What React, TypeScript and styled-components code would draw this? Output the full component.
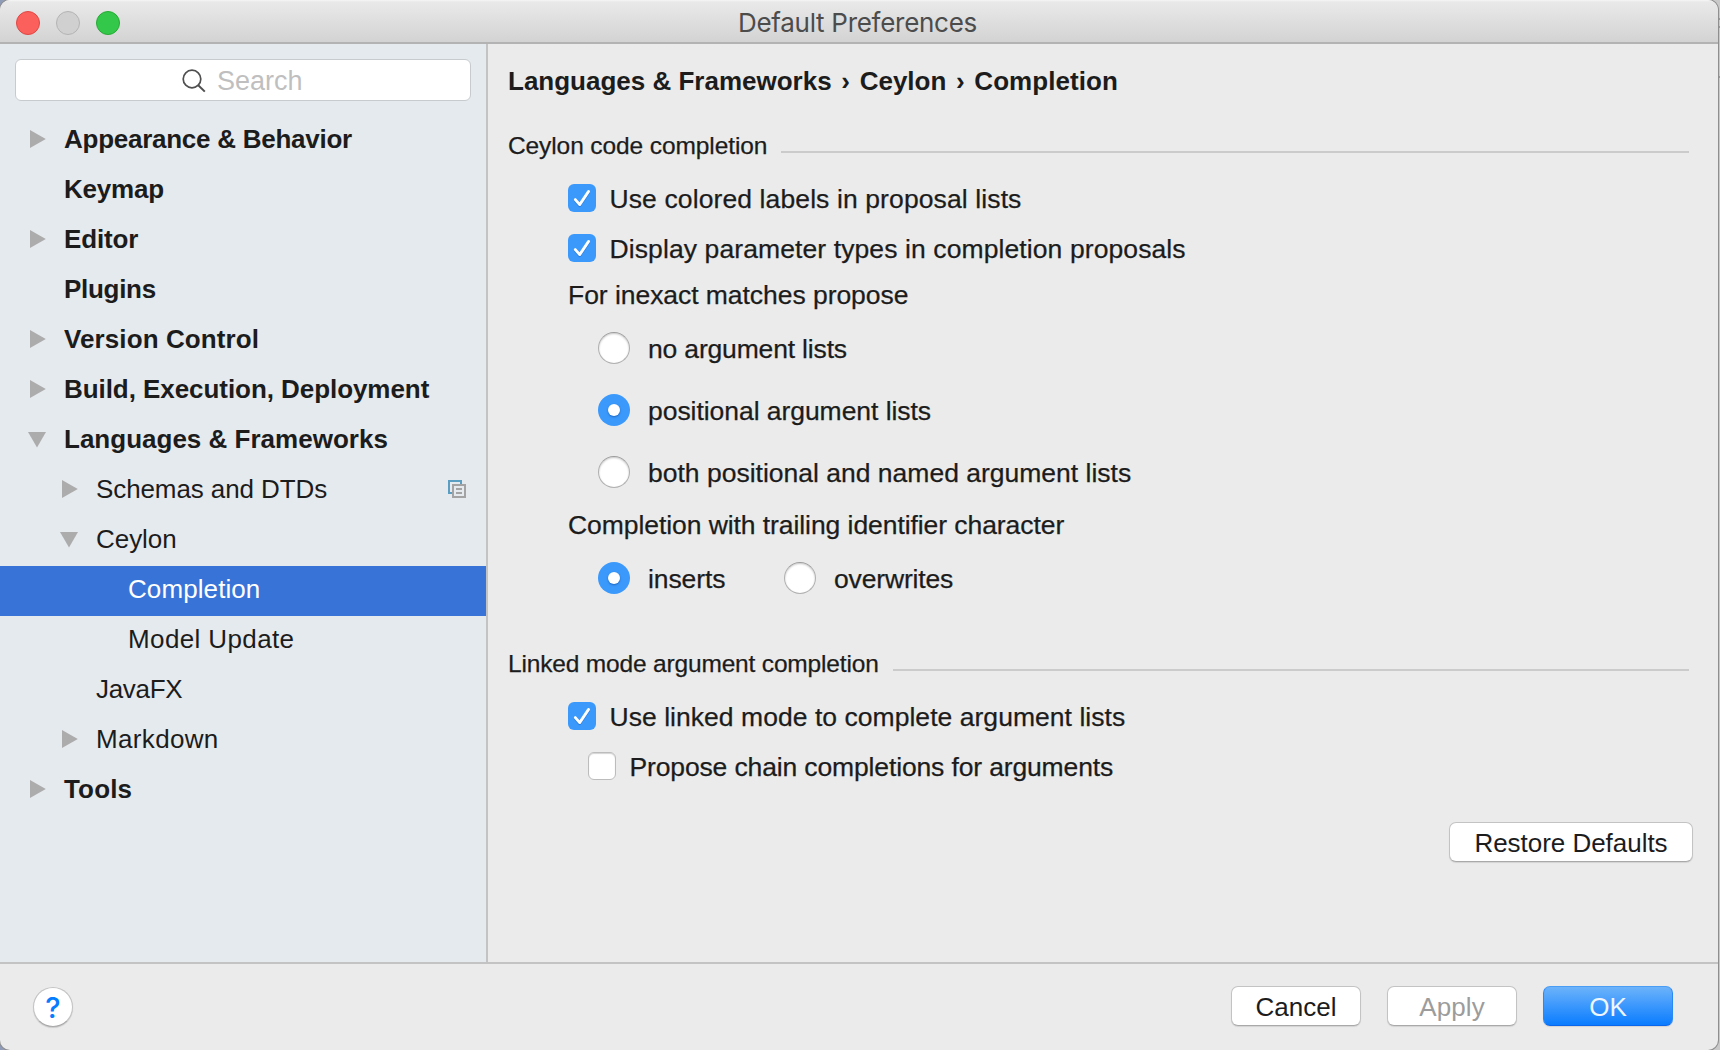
import React from "react";
import styled, { createGlobalStyle, css } from "styled-components";

const GlobalStyle = createGlobalStyle`
  html, body { margin: 0; padding: 0; overflow: hidden; }
  * { box-sizing: border-box; }
  body {
    font-family: "Liberation Sans", Arial, Helvetica, sans-serif;
    font-size: 26px;
    color: #1c1c1c;
    background: #cfcfcf;
  }
`;

const Desktop = styled.div`
  width: 1720px;
  height: 1050px;
  padding-right: 2px;
  background:
    linear-gradient(
      transparent 18px, #9a9a9a 18px, #9a9a9a 20px, transparent 20px,
      transparent 26px, #9a9a9a 26px, #9a9a9a 28px, transparent 28px,
      transparent 76px, #9a9a9a 76px, #9a9a9a 78px, transparent 78px
    ) right top / 2px 100% no-repeat,
    linear-gradient(90deg, #8e9bb8 0, #a8a8a8 20px, #c9c9c9 100%);
`;

const Window = styled.div`
  display: flex;
  flex-direction: column;
  width: 1718px;
  height: 1050px;
  border-radius: 10px;
  overflow: hidden;
  background: #ebebeb;
  box-shadow: 0 0 0 1px #8f8f8f;
`;

const TitleBar = styled.header`
  display: grid;
  grid-template-columns: 1fr auto 1fr;
  align-items: center;
  height: 44px;
  padding: 0 16px;
  background: linear-gradient(#f6f6f6 0, #e9e9e9 2px, #d3d3d3 42px);
  border-bottom: 2px solid #b3b3b3;
`;

const Lights = styled.div`
  display: flex;
  gap: 16px;
  padding-top: 2px;
`;

const Light = styled.i<{ $fill: string; $edge: string }>`
  width: 24px;
  height: 24px;
  border-radius: 50%;
  background: ${(p) => p.$fill};
  border: 1px solid ${(p) => p.$edge};
`;

const Title = styled.h1`
  margin: 0;
  font: 400 26px/42px Inter, "Liberation Sans", sans-serif;
  letter-spacing: -0.28px;
  color: #4c4c4c;
  padding: 2px 3px 0 0;
`;

const Body = styled.div`
  display: flex;
  height: 918px;
`;

const Sidebar = styled.aside`
  width: 488px;
  border-right: 2px solid #c3c3c3;
  background: #e5eaee;
`;

const SearchField = styled.div`
  display: flex;
  align-items: center;
  gap: 11px;
  height: 42px;
  margin: 15px;
  padding: 2px 0 0 166px;
  border: 1px solid #c7cbce;
  border-radius: 6px;
  background: #fff;
  font-size: 27px;
  color: #bfbfbf;
`;

const Row = styled.div<{ $depth: number; $selected?: boolean }>`
  display: flex;
  align-items: center;
  height: 50px;
  padding: 0 20px 4px ${(p) => 28 + p.$depth * 32}px;
  ${(p) =>
    p.$selected &&
    css`
      background: #3874d8;
      color: #fff;
    `}
`;

const Toggle = styled.span`
  display: flex;
  flex: none;
  width: 36px;
`;

const Text = styled.span<{ $track?: number; $bold?: boolean }>`
  white-space: nowrap;
  letter-spacing: ${(p) => p.$track ?? 0}px;
  font-weight: ${(p) => (p.$bold ? 700 : 400)};
`;

const RowEnd = styled.span`
  display: flex;
  margin-left: auto;
`;

const Main = styled.main`
  display: flex;
  flex-direction: column;
  flex: 1;
  padding: 16px 25px 0 18px;
`;

const Crumbs = styled.nav`
  display: flex;
  align-items: center;
  height: 42px;
  padding-left: 2px;
`;

const Separator = styled.span`
  width: 28px;
  text-align: center;
  font-weight: 700;
`;

const SectionHead = styled.h2<{ $top: number }>`
  display: flex;
  align-items: center;
  gap: 14px;
  height: 40px;
  margin: ${(p) => p.$top}px 4px 8px 2px;
  font-size: 24.5px;
  font-weight: 400;
  -webkit-text-stroke: 0.25px currentColor;
  ${Text} {
    padding-top: 2px;
  }
  &::after {
    content: "";
    flex: 1;
    height: 2px;
    margin-top: 14px;
    background: #cbcbcb;
  }
`;

const Option = styled.label<{ $indent?: number; $height?: number; $width?: number; $gap?: number }>`
  display: flex;
  align-items: center;
  gap: ${(p) => p.$gap ?? 13.5}px;
  height: ${(p) => p.$height ?? 50}px;
  width: ${(p) => (p.$width ? `${p.$width}px` : "auto")};
  padding-left: ${(p) => p.$indent ?? 0}px;
  ${Text} {
    padding-top: 2px;
  }
`;

const Group = styled.div`
  padding-left: 62px;
  font-size: 26.5px;
  -webkit-text-stroke: 0.25px currentColor;
`;

const Caption = styled.div<{ $height: number }>`
  display: flex;
  align-items: center;
  height: ${(p) => p.$height}px;
`;

const RadioLine = styled.div`
  display: flex;
`;

const Box = styled.span<{ $on?: boolean }>`
  display: flex;
  flex: none;
  width: 28px;
  height: 28px;
  border-radius: 6px;
  background: ${(p) => (p.$on ? "#3b99fc" : "#fff")};
  border: ${(p) => (p.$on ? "none" : "1px solid #bcbcbc")};
  box-shadow: ${(p) => (p.$on ? "none" : "inset 0 1px 1px #d4d4d4")};
`;

const Dot = styled.span<{ $on?: boolean }>`
  display: flex;
  flex: none;
  align-items: center;
  justify-content: center;
  width: 32px;
  height: 32px;
  border-radius: 50%;
  background: ${(p) => (p.$on ? "#3b99fc" : "#fff")};
  border: ${(p) => (p.$on ? "none" : "1px solid #b0b0b0")};
  border-top-color: #9c9c9c;
  box-shadow: ${(p) => (p.$on ? "none" : "inset 0 1px 2px #c8c8c8")};
  ${(p) =>
    p.$on &&
    css`
      &::after {
        content: "";
        width: 12px;
        height: 12px;
        border-radius: 50%;
        background: #fff;
        box-shadow: 0 1px 2px rgba(0, 50, 130, 0.5);
      }
    `}
`;

const Button = styled.button<{ $kind?: "primary" | "disabled"; $width?: number }>`
  width: ${(p) => p.$width ?? 130}px;
  height: 40px;
  padding: 2px 0 0;
  border: 1px solid #c3c3c3;
  border-bottom-color: #a9a9a9;
  border-radius: 7px;
  background: #fff;
  box-shadow: 0 1px 1px rgba(0, 0, 0, 0.1);
  font: inherit;
  line-height: 36px;
  color: ${(p) => (p.$kind === "disabled" ? "#9c9c9c" : "#1c1c1c")};
  ${(p) =>
    p.$kind === "primary" &&
    css`
      border-color: #4a9df5 #2a88f5 #0a66ea;
      background: linear-gradient(#6cb3fa, #0a7cff);
      color: #eef6ff;
    `}
`;

const RestoreRow = styled.div`
  display: flex;
  justify-content: flex-end;
  margin-top: 31px;
`;

const Footer = styled.footer`
  display: flex;
  align-items: center;
  gap: 26px;
  height: 88px;
  padding: 0 45px 2px 33px;
  border-top: 2px solid #c3c3c3;
`;

const Help = styled.button`
  width: 40px;
  height: 40px;
  margin: 2px auto 0 0;
  padding: 1px 0 0;
  border: 1px solid #c3c3c3;
  border-bottom-color: #a9a9a9;
  border-radius: 50%;
  background: #fff;
  box-shadow: 0 1px 1px rgba(0, 0, 0, 0.14);
  font: 500 29px/37px Inter, sans-serif;
  color: #067cff;
`;

const Arrow = ({ open }: { open: boolean }) => (
  <svg width="18" height="18" viewBox="0 0 18 18">
    <path d={open ? "M0 2H18L9 17.6Z" : "M2 0V18L17.8 9Z"} fill="#acacac" />
  </svg>
);

const ProjectIcon = () => (
  <svg width="18" height="18" viewBox="0 0 18 18" fill="none" strokeWidth="2">
    <path d="M4 13H1V1H13V4" stroke="#5a9fc2" />
    <path d="M5 5H17V17H5ZM8 9H14M8 13H14" stroke="#a3a3a3" />
  </svg>
);

const SearchIcon = () => (
  <svg width="24" height="24" viewBox="0 0 24 24" fill="none" stroke="#4f4f4f">
    <circle cx="10" cy="10" r="8.8" strokeWidth="1.7" />
    <path d="M16 16L22.8 22.6" strokeWidth="2" />
  </svg>
);

const CHECK_PATH = "M7.3 15.6L11.7 20.6L20.6 7.4";

const Check = () => (
  <svg width="28" height="28" viewBox="0 0 28 28" fill="none" strokeWidth="2.8" strokeLinecap="round" strokeLinejoin="round">
    <path d={CHECK_PATH} transform="translate(0 1.2)" stroke="#2b7fe0" />
    <path d={CHECK_PATH} stroke="#fff" />
  </svg>
);

type Item = {
  name: string;
  depth: number;
  track: number;
  open?: boolean;
  selected?: boolean;
  project?: boolean;
};

const items: Item[] = [
  { name: "Appearance & Behavior", depth: 0, track: -0.26, open: false },
  { name: "Keymap", depth: 0, track: -0.2 },
  { name: "Editor", depth: 0, track: -0.15, open: false },
  { name: "Plugins", depth: 0, track: -0.3 },
  { name: "Version Control", depth: 0, track: 0.1, open: false },
  { name: "Build, Execution, Deployment", depth: 0, track: -0.06, open: false },
  { name: "Languages & Frameworks", depth: 0, track: 0.01, open: true },
  { name: "Schemas and DTDs", depth: 1, track: -0.1, open: false, project: true },
  { name: "Ceylon", depth: 1, track: -0.05, open: true },
  { name: "Completion", depth: 2, track: 0.09, selected: true },
  { name: "Model Update", depth: 2, track: 0.38 },
  { name: "JavaFX", depth: 1, track: -0.3 },
  { name: "Markdown", depth: 1, track: 0.34, open: false },
  { name: "Tools", depth: 0, track: 0.15, open: false },
];

const TreeRow = ({ item }: { item: Item }) => (
  <Row $depth={item.depth} $selected={item.selected}>
    <Toggle>{item.open !== undefined && <Arrow open={item.open} />}</Toggle>
    <Text $bold={item.depth === 0} $track={item.track}>
      {item.name}
    </Text>
    {item.project && (
      <RowEnd>
        <ProjectIcon />
      </RowEnd>
    )}
  </Row>
);

type ChoiceProps = { label: string; track: number; on?: boolean; indent?: number; width?: number };

const Checkbox = ({ label, track, on, indent }: ChoiceProps) => (
  <Option $indent={indent}>
    <Box $on={on}>{on && <Check />}</Box>
    <Text $track={track}>{label}</Text>
  </Option>
);

const Radio = ({ label, track, on, indent = 30, width }: ChoiceProps) => (
  <Option $indent={indent} $height={62} $gap={18} $width={width}>
    <Dot $on={on} />
    <Text $track={track}>{label}</Text>
  </Option>
);

export default function App() {
  return (
    <Desktop>
      <GlobalStyle />
      <Window>
        <TitleBar>
          <Lights>
            <Light $fill="#fc605c" $edge="#df4744" />
            <Light $fill="#d0d0d0" $edge="#b4b4b4" />
            <Light $fill="#34c84a" $edge="#27aa35" />
          </Lights>
          <Title>Default Preferences</Title>
        </TitleBar>
        <Body>
          <Sidebar>
            <SearchField>
              <SearchIcon />
              Search
            </SearchField>
            {items.map((item) => (
              <TreeRow key={item.name} item={item} />
            ))}
          </Sidebar>
          <Main>
            <Crumbs>
              <Text $bold>Languages &amp; Frameworks</Text>
              <Separator>›</Separator>
              <Text $bold>Ceylon</Text>
              <Separator>›</Separator>
              <Text $bold $track={0.05}>Completion</Text>
            </Crumbs>
            <SectionHead $top={23}>
              <Text $track={-0.1}>Ceylon code completion</Text>
            </SectionHead>
            <Group>
              <Checkbox on label="Use colored labels in proposal lists" track={0.11} />
              <Checkbox on label="Display parameter types in completion proposals" track={0.1} />
              <Caption $height={44}>
                <Text $track={-0.05}>For inexact matches propose</Text>
              </Caption>
              <Radio label="no argument lists" track={-0.17} />
              <Radio on label="positional argument lists" track={-0.05} />
              <Radio label="both positional and named argument lists" track={0} />
              <Caption $height={44}>
                <Text $track={-0.07}>Completion with trailing identifier character</Text>
              </Caption>
              <RadioLine>
                <Radio on label="inserts" track={-0.1} width={216} />
                <Radio label="overwrites" track={-0.16} indent={0} />
              </RadioLine>
            </Group>
            <SectionHead $top={34}>
              <Text $track={-0.17}>Linked mode argument completion</Text>
            </SectionHead>
            <Group>
              <Checkbox on label="Use linked mode to complete argument lists" track={0.04} />
              <Checkbox label="Propose chain completions for arguments" track={-0.14} indent={20} />
            </Group>
            <RestoreRow>
              <Button $width={244}>
                <Text $track={-0.03}>Restore Defaults</Text>
              </Button>
            </RestoreRow>
          </Main>
        </Body>
        <Footer>
          <Help>?</Help>
          <Button>
            <Text>Cancel</Text>
          </Button>
          <Button $kind="disabled">
            <Text $track={0.1}>Apply</Text>
          </Button>
          <Button $kind="primary">
            <Text>OK</Text>
          </Button>
        </Footer>
      </Window>
    </Desktop>
  );
}
